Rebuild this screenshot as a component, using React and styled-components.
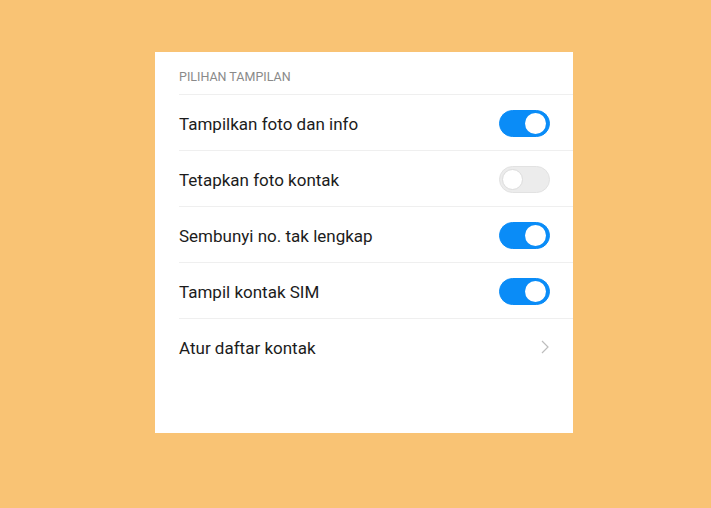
import React from "react";
import styled, { createGlobalStyle } from "styled-components";

const GlobalStyle = createGlobalStyle`
  html, body {
    margin: 0;
    padding: 0;
    background: #f9c374;
  }
  body {
    font-family: Roboto, "Noto Sans", "Liberation Sans", sans-serif;
  }
`;

const Page = styled.div`
  width: 711px;
  height: 508px;
  padding: 52px 0 0 155px;
  box-sizing: border-box;
`;

const Card = styled.div`
  width: 418px;
  height: 381px;
  background: #ffffff;
  padding-left: 24px;
  box-sizing: border-box;
  display: flex;
  flex-direction: column;
`;

const Header = styled.div`
  height: 42px;
  display: flex;
  align-items: center;
  padding-top: 7px;
  box-sizing: border-box;
  font-size: 12.5px;
  color: #8a8a8a;
`;

const Row = styled.div`
  height: 56px;
  display: flex;
  align-items: center;
  justify-content: space-between;
  border-top: 1px solid #efefef;
  padding-right: 23px;
  box-sizing: border-box;
`;

const Label = styled.span`
  font-size: 17px;
  color: #1c1c1c;
  padding-top: 2px;
`;

const Toggle = styled.div`
  width: 51px;
  height: 27px;
  margin-top: 1px;
  border-radius: 14px;
  box-sizing: border-box;
  position: relative;
  background: ${(p) => (p.on ? "#0a8cf7" : "#ececec")};
  border: 1px solid ${(p) => (p.on ? "#0a8cf7" : "#e2e2e2")};

  &::after {
    content: "";
    position: absolute;
    top: 2px;
    left: ${(p) => (p.on ? "25px" : "2px")};
    width: 21px;
    height: 21px;
    border-radius: 50%;
    background: #ffffff;
    box-sizing: border-box;
    border: ${(p) => (p.on ? "none" : "1px solid #dcdcdc")};
  }
`;

const Chevron = styled.svg`
  width: 8px;
  height: 14px;
  margin-right: 1px;
  margin-top: 1px;
`;

const items = [
  { label: "Tampilkan foto dan info", on: true },
  { label: "Tetapkan foto kontak", on: false },
  { label: "Sembunyi no. tak lengkap", on: true },
  { label: "Tampil kontak SIM", on: true },
];

export default function App() {
  return (
    <>
      <GlobalStyle />
      <Page>
        <Card>
          <Header>PILIHAN TAMPILAN</Header>
          {items.map((item) => (
            <Row key={item.label}>
              <Label>{item.label}</Label>
              <Toggle on={item.on ? 1 : 0} />
            </Row>
          ))}
          <Row>
            <Label>Atur daftar kontak</Label>
            <Chevron viewBox="0 0 8 14">
              <path d="M1 1 L7 7 L1 13" fill="none" stroke="#bdbdbd" strokeWidth="1.2" />
            </Chevron>
          </Row>
        </Card>
      </Page>
    </>
  );
}
